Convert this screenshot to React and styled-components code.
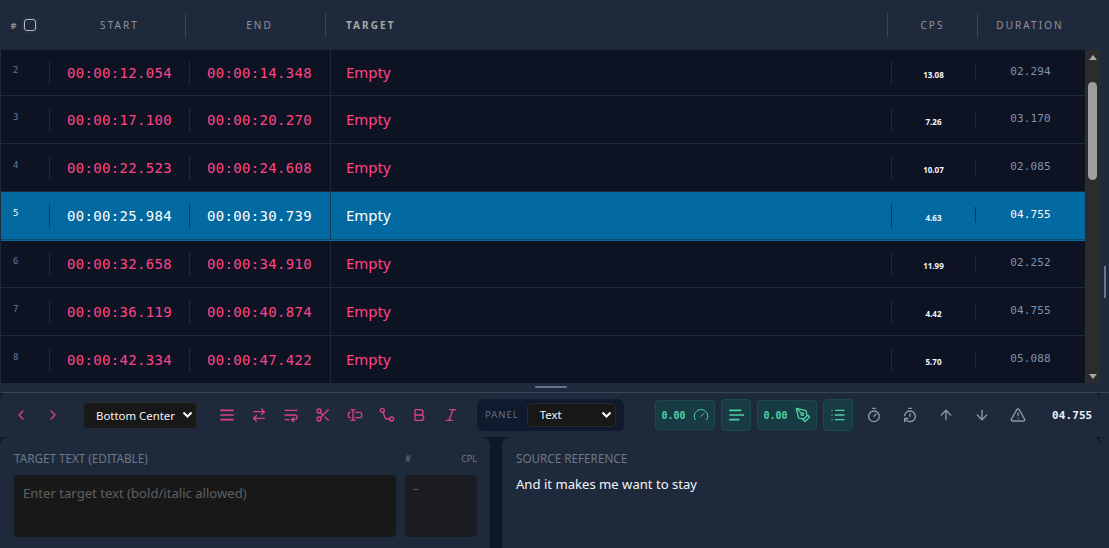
import React from 'react';
import styled, { createGlobalStyle } from 'styled-components';
import {
  ChevronLeft, ChevronRight, ArrowRightLeft, WrapText, Scissors, TextCursorInput,
  Bold, Italic, Gauge, PenTool, List, Timer, TimerReset, ArrowUp, ArrowDown, TriangleAlert,
} from 'lucide-react';

const Global = createGlobalStyle`
  html, body { margin: 0; padding: 0; height: 548px; overflow: hidden; background: #1e293b; }
  * { box-sizing: border-box; }
  #root { height: 548px; }
`;

const Page = styled.div`
  width: 1109px; height: 548px; display: flex; flex-direction: column;
  font-family: "Noto Sans", sans-serif; color: #fff; background: #1e293b; position: relative;
`;
const Main = styled.div`
  width: 1100px; height: 383px; display: flex; flex-direction: column; border-radius: 6px 6px 0 0; overflow: hidden;
`;
const HeaderRow = styled.div`
  height: 50px; flex: none; display: grid; grid-template-columns: 48px 138px 140px 562px 90px 104px;
  align-items: center; background: #1e293b;
`;
const HeadCell = styled.div`
  height: 24px; display: flex; align-items: center; justify-content: ${p => p.$left ? 'flex-start' : 'center'};
  padding-left: ${p => p.$left ? '20px' : (p.$pl ?? 0) + 'px'};
  gap: 8px; font-size: 10px; letter-spacing: 2.05px; color: ${p => p.$strong ? '#a8a8a8' : '#8f949c'};
  font-weight: ${p => p.$strong ? 700 : 400};
  border-right: ${p => p.$plain ? 'none' : '1px solid #3a4656'};
`;
const HashMark = styled.span`font-size: 9px; letter-spacing: 0; font-weight: 700; margin-left: -1px;`;
const Check = styled.span`
  width: 12px; height: 12px; display: block; border: 1.5px solid #b4b9c2; border-radius: 3px; box-shadow: 0 0 0 2px #28323f;
`;
const BodyWrap = styled.div`
  flex: 1; display: flex; min-height: 0; background: #0d1323; border-left: 1px solid #1e293b;
`;
const Rows = styled.div`flex: 1; min-width: 0;`;
const Row = styled.div`
  height: 48px; display: grid; grid-template-columns: 49px 140px 140px 561px 84px 110px; align-items: center;
  background: ${p => p.$active ? '#0369a1' : '#0d1323'};
  border-bottom: ${p => p.$active ? '1px solid #0c4a6e' : '1px solid #1e293b'};
  box-shadow: ${p => p.$active ? '0 1px 0 #0369a1' : 'none'};
  position: relative;
  z-index: ${p => p.$active ? 1 : 0};
  &:first-child { height: 46px; }
`;
const NumCell = styled.div`
  height: 24px; border-right: 1px solid ${p => p.$active ? '#0c3a58' : '#1e293b'};
  font-family: "DejaVu Sans Mono", monospace; font-size: 9px; padding: 3px 0 0 12px; line-height: 13px;
  color: ${p => p.$active ? '#fff' : '#64789a'};
`;
const TimeCell = styled.div`
  height: 24px; display: flex; align-items: center; padding-left: 17px;
  font-family: "DejaVu Sans Mono", monospace; font-size: 14px; letter-spacing: .33px;
  color: ${p => p.$active ? '#fff' : '#ff4489'};
  border-right: ${p => p.$divider ? `1px solid ${p.$active ? '#0c3a58' : '#1e293b'}` : 'none'};
`;
const TargetCell = styled.div`
  align-self: stretch; display: flex; align-items: center; padding: 0 0 1px 15px; font-size: 15px;
  color: ${p => p.$active ? '#fff' : '#ff4489'};
  border-left: 1px solid ${p => p.$active ? '#0c3a58' : '#1e293b'};
`;
const CpsCell = styled.div`
  height: 24px; border-left: 1px solid ${p => p.$active ? '#0c3a58' : '#1e293b'};
  display: flex; align-items: flex-end; justify-content: center; padding-bottom: 5px;
  font-family: "Noto Sans", sans-serif; font-size: 8px; font-weight: 700; color: #f4f7ff;
`;
const DurCell = styled.div`
  height: 16px; margin-top: -2px; border-left: 1px solid ${p => p.$active ? '#0c3a58' : '#1e293b'};
  display: flex; align-items: center; justify-content: center;
  font-family: "DejaVu Sans Mono", monospace; font-size: 11px; letter-spacing: .1px;
  color: ${p => p.$active ? '#fff' : '#7f93ab'};
`;
const Scrollbar = styled.div`
  width: 15px; flex: none; background: #2c2c2c; display: flex; flex-direction: column; align-items: center;
`;
const ScrollArrowUp = styled.span`
  width: 0; height: 0; margin-top: 5px; border-left: 4px solid transparent; border-right: 4px solid transparent; border-bottom: 5px solid #a8a8a8;
`;
const ScrollThumb = styled.div`
  width: 9px; height: 98px; margin-top: 22px; border-radius: 5px; background: #9f9f9f;
`;
const ScrollArrowDown = styled.span`
  width: 0; height: 0; margin-top: auto; margin-bottom: 4px; border-left: 4px solid transparent; border-right: 4px solid transparent; border-top: 5px solid #a8a8a8;
`;
const PageThumb = styled.div`
  position: absolute; right: 3px; top: 266px; width: 2px; height: 32px; background: #64748b;
`;
const Splitter = styled.div`
  height: 10px; flex: none; display: flex; justify-content: center; align-items: center; background: #1e293b;
  border-bottom: 1px solid #37475a;
`;
const Handle = styled.span`width: 32px; height: 2px; margin: -1px 0 0 -7px; border-radius: 1px; background: #64748b;`;
const ToolbarShell = styled.div`width: 1100px; flex: none; background: #0f172a;`;
const Toolbar = styled.div`
  height: 44px; display: flex; align-items: center; padding-left: 7px; background: #1e293b; border-radius: 6px 6px 0 0;
`;
const IconBtn = styled.button`
  width: 28px; height: 28px; border: none; padding: 0; background: transparent; border-radius: 50%;
  display: flex; align-items: center; justify-content: center; margin-right: ${p => p.$mr ?? 4}px;
  color: ${p => p.$grey ? '#8f9aa8' : '#db3f8b'};
`;
const Select = styled.div`
  height: ${p => p.$h}px; background: #181818; border: 1px solid #262a30; border-radius: 4px; display: flex; align-items: center;
  width: ${p => p.$w}px; padding-left: ${p => p.$pl}px; font-size: 11.4px; letter-spacing: 0; color: #f5f5f5; position: relative;
  margin-right: ${p => p.$mr ?? 0}px;
`;
const Caret = styled.svg`position: absolute; right: 3px; top: calc(50% - 4px); width: 11px; height: 8px;`;
const PanelBox = styled.div`
  width: 147px; height: 32px; margin: -1px 31px 0 0; border-radius: 6px; background: #0f1a2e; display: flex; align-items: center; padding-left: 8px; gap: 8px;
  font-size: 9.5px; letter-spacing: 1px; color: #64707f;
`;
const StatBox = styled.div`
  height: ${p => p.$h ?? 30}px; width: ${p => p.$w}px; margin-right: ${p => p.$mr}px; border: 1px solid #1c4b4f; border-radius: 4px; background: #183a43;
  display: flex; align-items: center; justify-content: center; gap: 7px;
  font-family: "DejaVu Sans Mono", monospace; font-size: 10px; font-weight: 700; color: #4fcfa8;
`;
const TotalTime = styled.div`
  margin-left: 20px; font-family: "DejaVu Sans Mono", monospace; font-size: 11px; font-weight: 700; letter-spacing: .1px; color: #eef2f7;
`;
const Panels = styled.div`
  flex: 1; display: flex; gap: 12px; min-height: 0; width: 1100px; background: #0f172a;
`;
const TargetPanel = styled.div`
  width: 490px; border-radius: 8px 8px 0 0; background: #1e293b; padding: 13px 13px 11px 14px;
  display: grid; grid-template-columns: 382px 1fr; column-gap: 9px; grid-template-rows: 17px 1fr; row-gap: 8px;
`;
const SourcePanel = styled.div`
  flex: 1; border-radius: 8px 8px 0 0; background: #1e293b; padding: 13px 14px;
`;
const Label = styled.div`font-size: 11.7px; color: #6f7885; line-height: 17px;`;
const MetaHead = styled.div`display: flex; justify-content: space-between; font-size: 9px; color: #6f7885; line-height: 17px;`;
const TextBox = styled.div`
  background: #181818; border-radius: 4px; padding: 9px; font-size: 13.1px; color: #5e6064; line-height: 18px;
`;
const MetaBox = styled.div`
  background: #1a1c22; border-radius: 4px; padding: 5px 8px; font-size: 11px; color: #5e6064;
`;
const SourceText = styled.div`margin-top: 8px; font-size: 13.1px; color: #f1f5f9; line-height: 18px;`;

const rows = [
  ['2', '00:00:12.054', '00:00:14.348', '13.08', '02.294'],
  ['3', '00:00:17.100', '00:00:20.270', '7.26', '03.170'],
  ['4', '00:00:22.523', '00:00:24.608', '10.07', '02.085'],
  ['5', '00:00:25.984', '00:00:30.739', '4.63', '04.755', true],
  ['6', '00:00:32.658', '00:00:34.910', '11.99', '02.252'],
  ['7', '00:00:36.119', '00:00:40.874', '4.42', '04.755'],
  ['8', '00:00:42.334', '00:00:47.422', '5.70', '05.088'],
];

const CaretIcon = () => (
  <Caret viewBox="0 0 11 8"><path d="M1.5 1.5 5.5 5.5 9.5 1.5" fill="none" stroke="#fff" strokeWidth="2" /></Caret>
);
const Svg = ({ w = 2, children }) => (
  <svg width="16" height="16" viewBox="0 0 24 24" fill="none" stroke="currentColor" strokeWidth={w} strokeLinecap="round" strokeLinejoin="round">{children}</svg>
);
const MenuIcon = () => <Svg w={2.6}><path d="M3 5h18M3 12h18M3 19h18" /></Svg>;
const RouteIcon = () => <Svg><circle cx="5" cy="5" r="3" /><circle cx="19" cy="18" r="3" /><path d="M6 8l3 8q.5 2 3 2h4" /></Svg>;
const BarsIcon = () => <Svg w={2.6}><path d="M3 5h16M3 12h20M3 19h13" /></Svg>;

export default function App() {
  const s = { size: 16, strokeWidth: 2 };
  return (
    <Page>
      <Global />
      <Main>
        <HeaderRow>
          <HeadCell $plain><HashMark>#</HashMark><Check /></HeadCell>
          <HeadCell $pl={6}>START</HeadCell>
          <HeadCell $pl={8}>END</HeadCell>
          <HeadCell $left $strong>TARGET</HeadCell>
          <HeadCell>CPS</HeadCell>
          <HeadCell $plain>DURATION</HeadCell>
        </HeaderRow>
        <BodyWrap>
          <Rows>
            {rows.map(([n, a, b, c, d, act]) => (
              <Row key={n} $active={act}>
                <NumCell $active={act}>{n}</NumCell>
                <TimeCell $active={act} $divider>{a}</TimeCell>
                <TimeCell $active={act}>{b}</TimeCell>
                <TargetCell $active={act}>Empty</TargetCell>
                <CpsCell $active={act}>{c}</CpsCell>
                <DurCell $active={act}>{d}</DurCell>
              </Row>
            ))}
          </Rows>
          <Scrollbar>
            <ScrollArrowUp />
            <ScrollThumb />
            <ScrollArrowDown />
          </Scrollbar>
        </BodyWrap>
      </Main>
      <PageThumb />
      <Splitter><Handle /></Splitter>
      <ToolbarShell>
        <Toolbar>
          <IconBtn><ChevronLeft {...s} /></IconBtn>
          <IconBtn $mr={16}><ChevronRight {...s} /></IconBtn>
          <Select $w={114} $h={27} $pl={12} $mr={16}>Bottom Center<CaretIcon /></Select>
          <IconBtn><MenuIcon /></IconBtn>
          <IconBtn><ArrowRightLeft {...s} /></IconBtn>
          <IconBtn><WrapText {...s} /></IconBtn>
          <IconBtn><Scissors {...s} /></IconBtn>
          <IconBtn><TextCursorInput {...s} /></IconBtn>
          <IconBtn><RouteIcon /></IconBtn>
          <IconBtn><Bold {...s} /></IconBtn>
          <IconBtn $mr={12}><Italic {...s} /></IconBtn>
          <PanelBox>PANEL<Select $w={89} $h={24} $pl={12}>Text<CaretIcon /></Select></PanelBox>
          <StatBox $w={60} $mr={6}>0.00<Gauge size={16} strokeWidth={1.5} /></StatBox>
          <StatBox $w={30} $h={32} $mr={6}><BarsIcon /></StatBox>
          <StatBox $w={60} $mr={6}>0.00<PenTool size={16} strokeWidth={2} /></StatBox>
          <StatBox $w={30} $h={32} $mr={7}><List {...s} /></StatBox>
          <IconBtn $grey $mr={8}><Timer {...s} /></IconBtn>
          <IconBtn $grey $mr={8}><TimerReset {...s} /></IconBtn>
          <IconBtn $grey $mr={8}><ArrowUp {...s} /></IconBtn>
          <IconBtn $grey $mr={8}><ArrowDown {...s} /></IconBtn>
          <IconBtn $grey $mr={0}><TriangleAlert {...s} /></IconBtn>
          <TotalTime>04.755</TotalTime>
        </Toolbar>
      </ToolbarShell>
      <Panels>
        <TargetPanel>
          <Label>TARGET TEXT (EDITABLE)</Label>
          <MetaHead><span>#</span><span>CPL</span></MetaHead>
          <TextBox>Enter target text (bold/italic allowed)</TextBox>
          <MetaBox>–</MetaBox>
        </TargetPanel>
        <SourcePanel>
          <Label>SOURCE REFERENCE</Label>
          <SourceText>And it makes me want to stay</SourceText>
        </SourcePanel>
      </Panels>
    </Page>
  );
}
